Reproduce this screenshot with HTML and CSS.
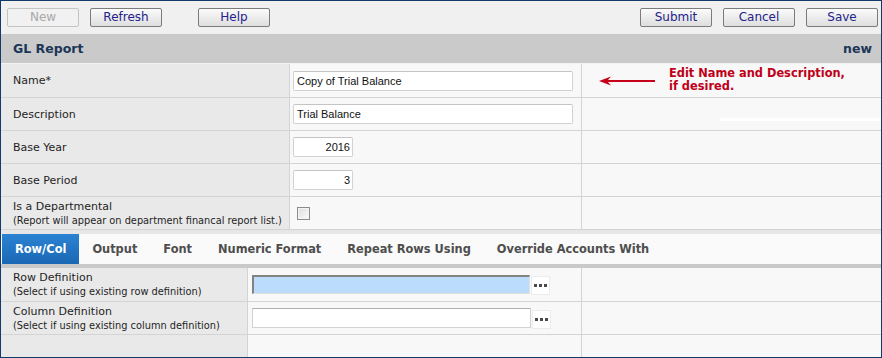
FILE: index.html
```html
<!DOCTYPE html>
<html lang="en">
<head>
  <meta charset="UTF-8">
  <title>GL Report</title>
  <link rel="stylesheet" href="styles.css">
</head>
<body>
  <div class="window">
    <div class="toolbar">
      <button class="btn" disabled>New</button>
      <button class="btn">Refresh</button>
      <button class="btn help">Help</button>
      <span class="spacer"></span>
      <button class="btn">Submit</button>
      <button class="btn">Cancel</button>
      <button class="btn">Save</button>
    </div>

    <div class="titlebar">
      <span>GL Report</span>
      <span>new</span>
    </div>

    <!-- main report fields -->
    <div class="form top">
      <div class="label">Name*</div>
      <div class="value"><input class="field wide" type="text" value="Copy of Trial Balance"></div>
      <div class="note callout">
        <svg class="arrow" width="56" height="10" viewBox="0 0 56 10">
          <path d="M0 5 L12 0.5 L9 4 L56 4 L56 6 L9 6 L12 9.5 Z" fill="#c8001a"/>
        </svg>
        <span class="hint">Edit Name and Description,<br>if desired.</span>
      </div>

      <div class="label">Description</div>
      <div class="value"><input class="field wide" type="text" value="Trial Balance"></div>
      <div class="note"><div class="streak"></div></div>

      <div class="label">Base Year</div>
      <div class="value"><input class="field num" type="text" value="2016"></div>
      <div class="note"></div>

      <div class="label">Base Period</div>
      <div class="value"><input class="field num" type="text" value="3"></div>
      <div class="note"></div>

      <div class="label two">Is a Departmental<small>(Report will appear on department financal report list.)</small></div>
      <div class="value"><input class="check" type="checkbox"></div>
      <div class="note"></div>
    </div>

    <div class="tabs">
      <span class="tab active">Row/Col</span>
      <span class="tab">Output</span>
      <span class="tab">Font</span>
      <span class="tab">Numeric Format</span>
      <span class="tab">Repeat Rows Using</span>
      <span class="tab">Override Accounts With</span>
    </div>

    <!-- row / column definitions -->
    <div class="form bottom">
      <div class="label two">Row Definition<small>(Select if using existing row definition)</small></div>
      <div class="value">
        <input class="field lookup focused" type="text">
        <span class="dots"><svg width="13" height="3"><rect x="0" width="3" height="3"/><rect x="5" width="3" height="3"/><rect x="10" width="3" height="3"/></svg></span>
      </div>
      <div class="note"></div>

      <div class="label two">Column Definition<small>(Select if using existing column definition)</small></div>
      <div class="value">
        <input class="field lookup" type="text">
        <span class="dots"><svg width="13" height="3"><rect x="0" width="3" height="3"/><rect x="5" width="3" height="3"/><rect x="10" width="3" height="3"/></svg></span>
      </div>
      <div class="note"></div>

      <div class="label last"></div>
      <div class="value last"></div>
      <div class="note last"></div>
    </div>
  </div>
</body>
</html>
```

FILE: styles.css
```css
html, body {
  margin: 0;
  padding: 0;
}
body {
  font-family: "DejaVu Sans", Verdana, sans-serif;
  font-size: 11px;
  color: #1e1e1e;
}
.window {
  width: 882px;
  height: 358px;
  box-sizing: border-box;
  border: 1px solid #123b6a; /* dark blue frame */
  display: flex;
  flex-direction: column;
  background-color: #f8f8f8;
  overflow: hidden;
}

/* toolbar with buttons */
.toolbar {
  height: 33px;
  box-sizing: border-box;
  padding: 7px 3px 0 6px;
  display: flex;
  align-items: flex-start;
  gap: 11px;
  background-color: #f0f0f0;
}
.spacer {
  flex: 1;
}
.btn {
  width: 72px;
  height: 19px;
  padding: 0;
  font-family: "DejaVu Sans", Verdana, sans-serif;
  font-size: 12px;
  line-height: 17px;
  color: #23238a;
  background: linear-gradient(#fbfbfb, #dedede);
  border: 1px solid #7b7b7b;
  border-radius: 2px;
}
.btn[disabled] {
  color: #a8a8a8;
  border-color: #c4c4c4;
  background: #f1f1f1;
}
.btn.help {
  margin-left: 25px;
}

.titlebar {
  height: 29px;
  padding: 0 9px 0 12px;
  display: flex;
  align-items: center;
  justify-content: space-between;
  background-color: #c9cac9;
  color: #1c3658;
  font-weight: bold;
  font-size: 12.5px;
  border-bottom: 1px solid #f2f2f2;
}

/* form grid */
.form {
  display: grid;
}
.form.top {
  grid-template-columns: 289px 292px 1fr;
  grid-template-rows: 34px repeat(4, 33px);
}
.form.bottom {
  flex: 1;
  grid-template-columns: 247px 334px 1fr;
  grid-template-rows: 34px 33px 1fr;
}
.label, .value, .note {
  box-sizing: border-box;
  border-bottom: 1px solid #d4d4d4;
  border-right: 1px solid #d4d4d4;
}
.label {
  background-color: #e9e9e9;
  padding-left: 12px;
  display: flex;
  align-items: center;
}
.label.two {
  flex-direction: column;
  align-items: flex-start;
  justify-content: center;
  line-height: 15px;
}
.label small {
  font-size: 9.8px;
  line-height: 14px;
}
.value {
  background-color: #f8f8f8;
  display: flex;
  align-items: center;
  padding-left: 3px;
}
.form.bottom .value {
  padding-left: 4px;
}
.note {
  background-color: #f8f8f8;
  border-right: none;
}
.last {
  border-bottom: none;
}

.field {
  box-sizing: border-box;
  height: 20px;
  padding: 0 3px;
  font-family: "Liberation Sans", Arial, sans-serif;
  font-size: 11px;
  color: #111;
  background-color: #fff;
  border: 1px solid #d2d2d2;
  border-top-color: #c4c4c4;
  border-radius: 2px;
  outline: none;
}
.field.wide {
  width: 280px;
}
.field.num {
  width: 60px;
  text-align: right;
  padding-right: 2px;
}
.field.lookup {
  width: 279px;
  border-top-color: #b0b0b0;
  border-radius: 0;
}
.field.lookup.focused {
  width: 278px;
  height: 19px;
  background-color: #bbdcfd;
  border: 1px solid #e0e0e0;
  border-top: 2px solid #828282;
  border-left: 2px solid #828282;
}
.dots {
  width: 19px;
  height: 19px;
  box-sizing: border-box;
  margin-left: 1px;
  margin-top: 2px;
  display: flex;
  align-items: center;
  justify-content: center;
  background-color: #fff;
  border: 1px solid #ececec;
}
.dots svg {
  fill: #4a4a4a;
}
.check {
  appearance: none;
  width: 13px;
  height: 13px;
  margin: 0 0 0 4px;
  box-sizing: border-box;
  border: 1px solid #8c8c8c;
  background: linear-gradient(135deg, #dcdcdc, #fdfdfd);
  box-shadow: inset 0 0 0 1px #f4f4f4;
}

/* callout next to name */
.callout {
  display: flex;
  align-items: center;
  padding-left: 17px;
  gap: 14px;
}
.hint {
  color: #c00018;
  font-weight: bold;
  font-size: 11.4px;
  line-height: 13px;
  margin-top: -2px;
}
.streak {
  height: 3px;
  margin: 20px 0 0 138px;
  background-color: #fff;
}

/* tabs */
.tabs {
  height: 30px;
  padding-left: 1px;
  display: flex;
  background-color: #fafafa;
  border-top: 4px solid #e6e6e6;
  border-bottom: 4px solid #c9c9c9;
}
.tab {
  padding: 0 13px;
  display: flex;
  align-items: center;
  font-weight: bold;
  font-size: 11.4px;
  color: #4e4e4e;
}
.tab.active {
  color: #fff;
  background: linear-gradient(#2b82d2, #1a68b4);
}
```
